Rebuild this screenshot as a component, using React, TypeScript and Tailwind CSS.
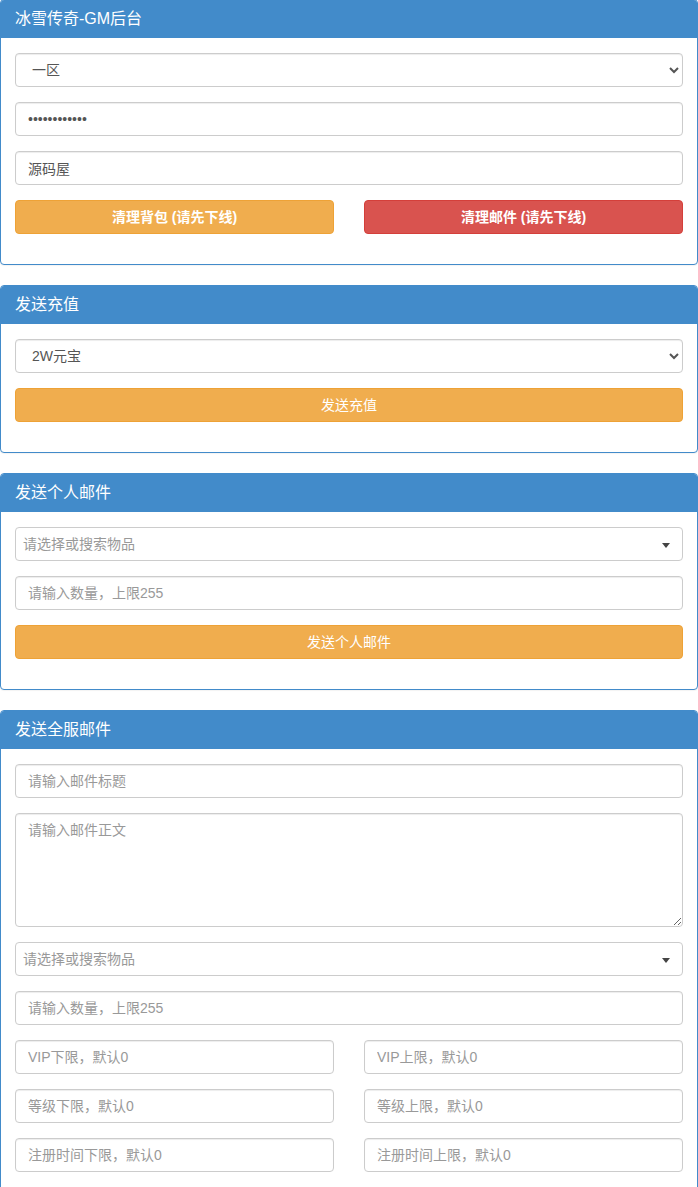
import React from "react";

const inputCls =
  "block w-full h-[34px] px-[12px] py-[6px] text-[14px] text-[#555] bg-white border border-[#ccc] rounded-[4px] shadow-[inset_0_1px_1px_rgba(0,0,0,0.075)] placeholder:text-[#999] outline-none";

function Panel({ title, children, first }: { title: string; children: React.ReactNode; first?: boolean }) {
  return (
    <div
      className={
        (first ? "-mt-[1px] " : "") +
        "mb-[20px] border border-[#428bca] rounded-[4px] bg-white shadow-[0_1px_1px_rgba(0,0,0,0.05)]"
      }
    >
      <div className="h-[38px] bg-[#428bca] text-white text-[16px] px-[14px] flex items-center rounded-t-[3px]">
        {title}
      </div>
      <div className="px-[14px] pt-[15px] pb-[15px]">{children}</div>
    </div>
  );
}

function Group({ children }: { children: React.ReactNode }) {
  return <div className="mb-[15px]">{children}</div>;
}

function Select2({ text }: { text: string }) {
  return (
    <div className="relative h-[34px] w-full bg-white border border-[#ccc] rounded-[4px] flex items-center pl-[7px] text-[14px] text-[#999]">
      {text}
      <span className="absolute right-[12px] top-[15px] w-0 h-0 border-l-[4px] border-r-[4px] border-t-[5px] border-l-transparent border-r-transparent border-t-[#444]" />
    </div>
  );
}

export default function App() {
  return (
    <div
      className="w-[698px] bg-white text-[14px] text-[#333]"
      style={{ fontFamily: '"Liberation Sans", "Noto Sans CJK SC", sans-serif' }}
    >
      <Panel title="冰雪传奇-GM后台" first>
        <Group>
          <select className={inputCls} defaultValue="1">
            <option value="1">一区</option>
            <option value="2">二区</option>
          </select>
        </Group>
        <Group>
          <input className={inputCls} type="password" defaultValue="123456789012" />
        </Group>
        <Group>
          <input className={inputCls} type="text" defaultValue="源码屋" />
        </Group>
        <Group>
          <div className="grid grid-cols-2 gap-[30px]">
            <button className="h-[34px] w-full bg-[#f0ad4e] border border-[#eea236] rounded-[4px] text-white text-[14px] font-semibold">
              清理背包 (请先下线)
            </button>
            <button className="h-[34px] w-full bg-[#d9534f] border border-[#d43f3a] rounded-[4px] text-white text-[14px] font-semibold">
              清理邮件 (请先下线)
            </button>
          </div>
        </Group>
      </Panel>

      <Panel title="发送充值">
        <Group>
          <select className={inputCls} defaultValue="a">
            <option value="a">2W元宝</option>
          </select>
        </Group>
        <Group>
          <button className="h-[34px] w-full bg-[#f0ad4e] border border-[#eea236] rounded-[4px] text-white text-[14px]">
            发送充值
          </button>
        </Group>
      </Panel>

      <Panel title="发送个人邮件">
        <Group>
          <Select2 text="请选择或搜索物品" />
        </Group>
        <Group>
          <input className={inputCls} placeholder="请输入数量，上限255" />
        </Group>
        <Group>
          <button className="h-[34px] w-full bg-[#f0ad4e] border border-[#eea236] rounded-[4px] text-white text-[14px]">
            发送个人邮件
          </button>
        </Group>
      </Panel>

      <Panel title="发送全服邮件">
        <Group>
          <input className={inputCls} placeholder="请输入邮件标题" />
        </Group>
        <Group>
          <textarea
            className="block w-full h-[114px] px-[12px] py-[6px] text-[14px] text-[#555] bg-white border border-[#ccc] rounded-[4px] shadow-[inset_0_1px_1px_rgba(0,0,0,0.075)] placeholder:text-[#999] outline-none resize-y"
            placeholder="请输入邮件正文"
          />
        </Group>
        <Group>
          <Select2 text="请选择或搜索物品" />
        </Group>
        <Group>
          <input className={inputCls} placeholder="请输入数量，上限255" />
        </Group>
        <Group>
          <div className="grid grid-cols-2 gap-[30px]">
            <input className={inputCls} placeholder="VIP下限，默认0" />
            <input className={inputCls} placeholder="VIP上限，默认0" />
          </div>
        </Group>
        <Group>
          <div className="grid grid-cols-2 gap-[30px]">
            <input className={inputCls} placeholder="等级下限，默认0" />
            <input className={inputCls} placeholder="等级上限，默认0" />
          </div>
        </Group>
        <Group>
          <div className="grid grid-cols-2 gap-[30px]">
            <input className={inputCls} placeholder="注册时间下限，默认0" />
            <input className={inputCls} placeholder="注册时间上限，默认0" />
          </div>
        </Group>
      </Panel>
    </div>
  );
}
